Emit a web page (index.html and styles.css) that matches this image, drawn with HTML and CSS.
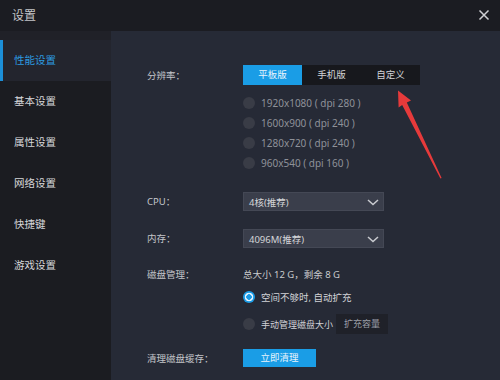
FILE: index.html
```html
<!DOCTYPE html>
<html lang="zh-CN">
<head>
<meta charset="utf-8">
<title>设置</title>
<link rel="stylesheet" href="styles.css">
</head>
<body>
<div class="window">
  <header class="titlebar">
    <span class="title">设置</span>
    <span class="close">
      <svg width="12" height="12" viewBox="0 0 12 12"><path d="M1.5 1.5 L10.5 10.5 M10.5 1.5 L1.5 10.5" stroke="#cfd0d4" stroke-width="1.5" fill="none"/></svg>
    </span>
  </header>
  <div class="main">
    <nav class="sidebar">
      <div class="nav-top"></div>
      <div class="nav-item active">性能设置</div>
      <div class="nav-item">基本设置</div>
      <div class="nav-item">属性设置</div>
      <div class="nav-item">网络设置</div>
      <div class="nav-item">快捷键</div>
      <div class="nav-item">游戏设置</div>
    </nav>
    <section class="content">
      <div class="row row-res">
        <div class="label">分辨率<span class="punct">：</span></div>
        <div class="value">
          <div class="seg">
            <span class="seg-btn on">平板版</span>
            <span class="seg-btn">手机版</span>
            <span class="seg-btn">自定义</span>
          </div>
          <div class="options">
            <div class="opt"><span class="radio"></span>1920x1080 ( dpi 280 )</div>
            <div class="opt"><span class="radio"></span>1600x900 ( dpi 240 )</div>
            <div class="opt"><span class="radio"></span>1280x720 ( dpi 240 )</div>
            <div class="opt"><span class="radio"></span>960x540 ( dpi 160 )</div>
          </div>
        </div>
      </div>
      <div class="row row-cpu">
        <div class="label">CPU<span class="punct">：</span></div>
        <div class="value">
          <div class="select"><span>4核(推荐)</span><svg class="chev" width="12" height="7" viewBox="0 0 12 7"><path d="M1 1 L6 5.5 L11 1" stroke="#c9cbd0" stroke-width="1.5" fill="none"/></svg></div>
        </div>
      </div>
      <div class="row row-mem">
        <div class="label">内存<span class="punct">：</span></div>
        <div class="value">
          <div class="select"><span>4096M(推荐)</span><svg class="chev" width="12" height="7" viewBox="0 0 12 7"><path d="M1 1 L6 5.5 L11 1" stroke="#c9cbd0" stroke-width="1.5" fill="none"/></svg></div>
        </div>
      </div>
      <div class="row row-disk">
        <div class="label">磁盘管理<span class="punct">：</span></div>
        <div class="value">
          <div class="disk-info">总大小 12 G<span class="punct">，</span>剩余 8 G</div>
          <div class="opt opt-disk opt-disk1"><span class="radio checked"></span>空间不够时, 自动扩充</div>
          <div class="opt opt-disk opt-disk2"><span class="radio"></span>手动管理磁盘大小<span class="btn-dark">扩充容量</span></div>
        </div>
      </div>
      <div class="row row-clean">
        <div class="label">清理磁盘缓存<span class="punct">：</span></div>
        <div class="value"><span class="btn-blue">立即清理</span></div>
      </div>
    </section>
  </div>
  <svg class="arrow" width="500" height="380" viewBox="0 0 500 380">
    <polygon points="398,90.5 411,100.5 406.8,102.6 441.6,178 440.4,178.4 402.2,105 398.6,107.5" fill="#e63a3b"/>
  </svg>
</div>
</body>
</html>
```

FILE: styles.css
```css
* { box-sizing: border-box; margin: 0; padding: 0; }
html, body { width: 500px; height: 380px; overflow: hidden; }
body {
  background: #262a36;
  font-family: "Noto Sans CJK SC", "Noto Sans", sans-serif;
  color: #c9cacd;
}
.window {
  position: relative;
  width: 500px;
  height: 380px;
  display: flex;
  flex-direction: column;
}
.titlebar {
  height: 31px;
  flex: none;
  background: #1b1c22;
  display: flex;
  align-items: center;
  justify-content: space-between;
  padding: 0 10px 0 12px;
}
.title {
  font-size: 12px;
  color: #c4c5c9;
  line-height: 14px;
  margin-top: -1px;
}
.close { display: flex; width: 12px; height: 12px; margin-top: -1px; }
.main { flex: 1; display: flex; }
.sidebar {
  width: 111px;
  flex: none;
  background: #1b1c21;
  display: flex;
  flex-direction: column;
}
.nav-top { height: 9px; background: #202128; }
.nav-item {
  height: 41px;
  line-height: 39px;
  padding-left: 14px;
  font-size: 10.5px;
  color: #d6d7da;
}
.nav-item.active {
  background: #23252e;
  color: #2c9be0;
  border-left: 3px solid #1c8fd8;
  padding-left: 11px;
}
.content {
  flex: 1;
  padding: 34px 0 0 36px;
  font-family: "Noto Sans", "Noto Sans CJK SC", sans-serif;
  font-size: 9.5px;
}
.punct { font-family: "Noto Sans CJK TC", "Noto Sans CJK SC", sans-serif; }
.row {
  display: grid;
  grid-template-columns: 96px 1fr;
}
.label { color: #c3c5ca; line-height: 20px; }
.seg {
  display: flex;
  width: 177px;
  height: 20px;
  background: #17181d;
}
.seg-btn {
  flex: 1;
  text-align: center;
  line-height: 20px;
  color: #d2d3d6;
}
.seg-btn.on { background: #1a9de6; color: #e9f5fd; }
.options { margin-top: 8px; font-size: 10px; }
.opt {
  display: flex;
  align-items: center;
  height: 20px;
  color: #8e9199;
}
.radio {
  width: 12px;
  height: 12px;
  border-radius: 50%;
  background: #393c46;
  margin-right: 6px;
  flex: none;
}
.radio.checked {
  background: radial-gradient(circle, #1a9be6 0 2.5px, #e3f2fc 3px 4px, #1a9be6 4.6px);
}
.row-cpu { margin-top: 19px; }
.row-mem { margin-top: 18px; }
.row-cpu .label, .row-mem .label { line-height: 19px; }
.select {
  width: 141px;
  height: 19px;
  background: #3a3e4b;
  border: 1px solid #444855;
  display: flex;
  align-items: center;
  justify-content: space-between;
  padding: 0 4px 0 5px;
  color: #d4d5d8;
}
.chev { margin-top: 1px; }
.row-disk { margin-top: 19px; }
.row-disk .label { line-height: 14px; }
.disk-info { line-height: 14px; color: #c9cacd; }
.opt-disk { color: #d2d3d6; }
.opt-disk1 { margin-top: 5px; }
.opt-disk2 { margin-top: 7px; font-size: 9px; }
.btn-dark {
  margin-left: 3px;
  height: 20px;
  line-height: 20px;
  padding: 0 8px;
  background: #1f2129;
  color: #9b9ea6;
}
.row-clean { margin-top: 15px; }
.row-clean .label { line-height: 18px; }
.btn-blue {
  display: block;
  width: 73px;
  height: 18px;
  line-height: 18px;
  text-align: center;
  background: #1a9de6;
  color: #e6f3fc;
}
.arrow { position: absolute; left: 0; top: 0; pointer-events: none; }
```
